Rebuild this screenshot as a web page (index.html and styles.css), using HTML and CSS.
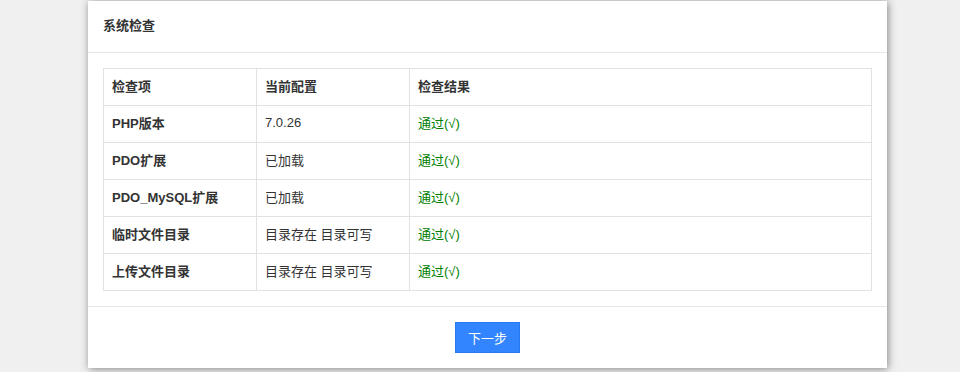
FILE: index.html
```html
<!DOCTYPE html>
<html lang="zh">
<head>
<meta charset="utf-8">
<link rel="stylesheet" href="styles.css">
</head>
<body>
<div class="panel">
  <div class="panel-head">系统检查</div>
  <div class="panel-body">
    <table class="check">
      <thead>
        <tr><th>检查项</th><th>当前配置</th><th>检查结果</th></tr>
      </thead>
      <tbody>
        <tr><td class="name">PHP版本</td><td>7.0.26</td><td class="ok">通过(√)</td></tr>
        <tr><td class="name">PDO扩展</td><td>已加载</td><td class="ok">通过(√)</td></tr>
        <tr><td class="name">PDO_MySQL扩展</td><td>已加载</td><td class="ok">通过(√)</td></tr>
        <tr><td class="name">临时文件目录</td><td>目录存在 目录可写</td><td class="ok">通过(√)</td></tr>
        <tr><td class="name">上传文件目录</td><td>目录存在 目录可写</td><td class="ok">通过(√)</td></tr>
      </tbody>
    </table>
  </div>
  <div class="panel-foot"><button class="btn">下一步</button></div>
</div>
</body>
</html>
```
FILE: styles.css
```css
html, body {
  margin: 0;
  padding: 0;
  background: #f0f0f0;
  font-family: "Liberation Sans", "Noto Sans CJK SC", sans-serif;
  font-size: 13px;
  color: #333;
}
body {
  padding-top: 1px;
  height: 371px;
  overflow: hidden;
}
.panel {
  margin-left: 88px;
  width: 799px;
  background: #fff;
  box-shadow: 1px 1px 8px rgba(0, 0, 0, 0.45);
}
.panel-head {
  height: 51px;
  line-height: 50px;
  padding: 0 15px;
  font-weight: bold;
  border-bottom: 1px solid #e6e6e6;
}
.panel-body {
  padding: 15px;
  border-bottom: 1px solid #e6e6e6;
}
.check {
  width: 100%;
  border-collapse: collapse;
  table-layout: fixed;
}
.check th, .check td {
  border: 1px solid #e2e2e2;
  height: 33px;
  padding: 0 8px 3px;
  text-align: left;
  font-weight: normal;
}
.check th:nth-child(1), .check th:nth-child(2) {
  width: 136px;
}
.check th, .check td.name {
  font-weight: bold;
}
.check td.ok {
  color: #008000;
}
.panel-foot {
  padding: 15px;
  display: flex;
  justify-content: center;
}
.btn {
  width: 65px;
  height: 31px;
  background: #3385ff;
  border: 1px solid #2a78f0;
  color: #fff;
  font-family: inherit;
  font-size: 13px;
  padding: 0;
}
```
